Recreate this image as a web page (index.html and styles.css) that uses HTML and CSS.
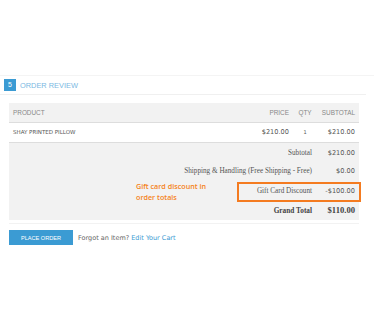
FILE: index.html
```html
<!DOCTYPE html>
<html lang="en">
<head>
  <meta charset="UTF-8">
  <meta name="viewport" content="width=device-width, initial-scale=1.0">
  <title>Order Review</title>
  <link rel="stylesheet" href="styles.css">
</head>
<body>
  <div class="checkout-step">
    <div class="step-title">
      <span class="step-number">5</span>
      <span class="step-name">Order Review</span>
    </div>

    <div class="review-wrap">
      <table class="review-table">
        <thead>
          <tr>
            <th class="col-product">Product</th>
            <th class="col-price">Price</th>
            <th class="col-qty">Qty</th>
            <th class="col-subtotal">Subtotal</th>
          </tr>
        </thead>
        <tbody>
          <tr>
            <td class="col-product product-name">Shay Printed Pillow</td>
            <td class="col-price">$210.00</td>
            <td class="col-qty">1</td>
            <td class="col-subtotal">$210.00</td>
          </tr>
        </tbody>
        <tfoot>
          <tr class="first-total">
            <td colspan="3" class="total-label">Subtotal</td>
            <td class="total-value">$210.00</td>
          </tr>
          <tr>
            <td colspan="3" class="total-label">Shipping &amp; Handling (Free Shipping - Free)</td>
            <td class="total-value">$0.00</td>
          </tr>
          <tr>
            <td colspan="3" class="total-label">Gift Card Discount</td>
            <td class="total-value">-$100.00</td>
          </tr>
          <tr class="grand-total">
            <td colspan="3" class="total-label">Grand Total</td>
            <td class="total-value">$110.00</td>
          </tr>
        </tfoot>
      </table>

      <!-- annotation overlay -->
      <div class="callout-text">Gift card discount in<br>order totals</div>
      <div class="callout-box"></div>
    </div>

    <div class="review-actions">
      <button class="place-order">Place Order</button>
      <span class="forgot">Forgot an Item? <a href="#">Edit Your Cart</a></span>
    </div>
  </div>
</body>
</html>
```

FILE: styles.css
```css
* {
  box-sizing: border-box;
}

body {
  margin: 0;
  background: #fff;
  font-family: "DejaVu Sans", Verdana, sans-serif;
  color: #555;
}

.checkout-step {
  margin-top: 75px;
  border-top: 1px solid #f4f4f4;
}

.step-title {
  display: flex;
  align-items: center;
  height: 19px;
  padding-left: 4px;
  border-bottom: 1px solid #f0f0f0;
  margin-right: 8px;
}

.step-number {
  width: 12px;
  height: 12px;
  background: #3b9bd3;
  color: #fff;
  font-family: "Liberation Sans", Arial, sans-serif;
  font-size: 7px;
  line-height: 12px;
  text-align: center;
}

.step-name {
  margin-left: 4px;
  color: #7ab8e2;
  font-family: "Liberation Sans", Arial, sans-serif;
  font-size: 7.4px;
  text-transform: uppercase;
}

.review-wrap {
  position: relative;
  margin: 8px 15px 0 9px;
  padding-bottom: 3px;
  border-bottom: 1px solid #f2f2f2;
}

.review-table {
  width: 100%;
  border-collapse: collapse;
}

.review-table th {
  height: 19px;
  padding: 0 4px;
  background: #f2f2f2;
  border-bottom: 1px solid #ddd;
  font-family: "Liberation Sans", Arial, sans-serif;
  font-weight: normal;
  font-size: 6.4px;
  color: #888;
  text-transform: uppercase;
  text-align: left;
}

.review-table td {
  height: 20px;
  padding: 0 4px;
  font-size: 6.6px;
  color: #555;
}

.review-table tbody td {
  border-bottom: 1px solid #ddd;
}

.product-name {
  font-size: 5.5px !important;
  text-transform: uppercase;
}

.review-table .col-price {
  width: 44px;
  text-align: right;
  padding-right: 5px;
}

.review-table .col-qty {
  width: 22px;
  text-align: center;
  font-size: 5px;
}

.review-table th.col-qty {
  font-size: 6.4px;
}

.review-table .col-subtotal {
  width: 43px;
  text-align: right;
}

.review-table tfoot td {
  background: #f2f2f2;
  height: 19.5px;
}

.review-table .first-total td {
  padding-top: 1px;
}

.review-table .total-label {
  text-align: right;
  font-family: "Liberation Serif", "Times New Roman", serif;
  font-size: 7.2px;
  color: #555;
}

.review-table .total-value {
  text-align: right;
}

.grand-total .total-label {
  font-weight: bold;
  font-size: 7.3px !important;
  color: #444 !important;
}

.grand-total .total-value {
  font-family: "Liberation Serif", "Times New Roman", serif;
  font-weight: bold;
  font-size: 8.6px !important;
  color: #444 !important;
}

.callout-text {
  position: absolute;
  left: 127px;
  top: 78px;
  color: #f58220;
  font-family: "Open Sans", sans-serif;
  font-weight: 600;
  font-size: 7.2px;
  line-height: 11px;
}

.callout-box {
  position: absolute;
  left: 228px;
  top: 79px;
  width: 124px;
  height: 20px;
  border: 2px solid #f47b20;
}

.review-actions {
  display: flex;
  align-items: center;
  margin: 6px 0 0 9px;
}

.place-order {
  width: 64px;
  height: 15px;
  padding: 0;
  border: none;
  background: #3b9bd3;
  color: #fff;
  font-family: "Liberation Sans", Arial, sans-serif;
  font-size: 5.6px;
  text-transform: uppercase;
}

.forgot {
  margin-left: 5px;
  font-size: 6.5px;
  color: #666;
}

.forgot a {
  color: #3b9bd3;
  text-decoration: none;
}
```
